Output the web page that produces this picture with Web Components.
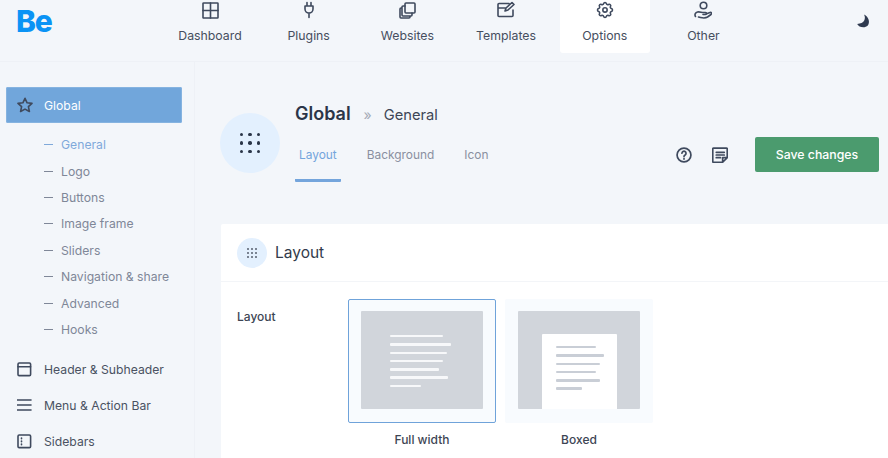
<!DOCTYPE html>
<html lang="en"><head><meta charset="utf-8"><title>Options</title>
<style>html,body{margin:0;height:100%;overflow:hidden;background:#f3f6fa;font-family:"Inter","Liberation Sans",sans-serif;color:#3e4656}</style></head>
<body>
<be-app></be-app>
<script>
const ICONS={
dashboard:'<rect x="1" y="1" width="15" height="15" rx=".6"/><path d="M1 8.500h15M8.500 1v15"/>',
plug:'<path d="M7 1.500V5M11 1.500V5M5 5h8v3a4 4 0 0 1-8 0zM9 12v4.500"/>',
pages:'<rect x="6" y="1" width="10" height="10" rx="1"/><path d="M6 4H4a1 1 0 0 0-1 1v8a1 1 0 0 0 1 1h8a1 1 0 0 0 1-1v-2M3 6H2a1 1 0 0 0-1 1v8a1 1 0 0 0 1 1h8a1 1 0 0 0 1-1v-1"/>',
template:'<path d="M12 2.500H2a1 1 0 0 0-1 1v11a1 1 0 0 0 1 1h13a1 1 0 0 0 1-1V9M1 7h8M8 10l1-3 6-5.500 2 2L11 9z"/>',
gear:'<path d="M10.325 4.317c.426-1.756 2.924-1.756 3.350 0a1.724 1.724 0 0 0 2.573 1.066c1.543-.940 3.310.826 2.370 2.370a1.724 1.724 0 0 0 1.065 2.572c1.756.426 1.756 2.924 0 3.350a1.724 1.724 0 0 0-1.066 2.573c.940 1.543-.826 3.310-2.370 2.370a1.724 1.724 0 0 0-2.572 1.065c-.426 1.756-2.924 1.756-3.350 0a1.724 1.724 0 0 0-2.573-1.066c-1.543.940-3.310-.826-2.370-2.370a1.724 1.724 0 0 0-1.065-2.572c-1.756-.426-1.756-2.924 0-3.350a1.724 1.724 0 0 0 1.066-2.573c-.940-1.543.826-3.310 2.370-2.370 1 .608 2.296.070 2.572-1.065z"/><circle cx="12" cy="12" r="2.600"/>',
hand:'<circle cx="9.500" cy="4.500" r="3.300"/><path d="M1.500 15.500c-1.200-2 0-4 2-4.500 2-.5 4 .5 6 .5h2c1.500 0 1.500 2 0 2H9m3-.5 4-1.500c1.500-.5 2 1 1 2l-3.500 2.500c-1.500 1-5 1-7 .5l-2-.5"/>',
star:'<path d="M8 1.300l2.100 4.500 4.900.6-3.600 3.300 1 4.800L8 12.100l-4.400 2.400 1-4.800L1 6.400l4.900-.6z"/>',
header:'<rect x="1" y="1" width="12.600" height="12.600" rx="1.200"/><path d="M1 4.800h12.600"/>',
menu:'<path d="M0.500 2h13.500M0.500 7h13.500M0.500 12h13.500"/>',
sidebar:'<rect x="1" y="1" width="12.600" height="12.600" rx="1.200"/><path d="M4.500 4v.8M4.500 7v.8M4.500 10v.8"/>',
help:'<circle cx="7.500" cy="7.500" r="6.500"/><path d="M5.600 5.800a1.900 1.900 0 1 1 2.900 1.700c-.7.400-1 .8-1 1.500M7.500 10.800v.5"/>',
note:'<path d="M1.500 1h12a.8.8 0 0 1 .8.800V10l-4.300 4.300H1.500a.8.8 0 0 1-.8-.8V1.800a.8.800 0 0 1 .8-.8zM4 5h7.500M4 7.500h7.500M4 10h4M14 10h-4v4"/>'
};
class BeIcon extends HTMLElement{connectedCallback(){
 if(this.shadowRoot)return;
 const s=this.getAttribute('size')||18,v=this.getAttribute('box')||s;
 this.attachShadow({mode:'open'}).innerHTML=`<style>:host{display:inline-flex;flex:none;line-height:0}svg{fill:none;stroke:currentColor;stroke-width:${this.getAttribute('sw')||1.6};stroke-linecap:round;stroke-linejoin:round}</style><svg width="${s}" height="${s}" viewBox="0 0 ${v} ${v}">${ICONS[this.getAttribute('name')]}</svg>`;
}}
customElements.define('be-icon',BeIcon);

class BeDots extends HTMLElement{connectedCallback(){
 if(this.shadowRoot)return;
 const d=+this.getAttribute('dot'),g=+this.getAttribute('gap');
 this.attachShadow({mode:'open'}).innerHTML=`<style>:host{display:grid;grid-template-columns:repeat(3,${d}px);gap:${g}px}i{width:${d}px;height:${d}px;border-radius:50%;background:currentColor}</style>`+'<i></i>'.repeat(9);
}}
customElements.define('be-dots',BeDots);

class BeNavItem extends HTMLElement{connectedCallback(){
 if(this.shadowRoot)return;
 this.attachShadow({mode:'open'}).innerHTML=`<style>
 :host{display:flex;flex-direction:column;align-items:center;width:90px;height:53px;box-sizing:border-box;border-radius:0 0 3px 3px;font-size:12.300px;color:#464e5e}
 :host([active]){background:#fff}
 .i{height:20px;display:flex;align-items:center;color:#3f4a5e}
 .t{margin-top:7.500px;line-height:16px}
 </style><div class="i"><slot name="icon"></slot></div><div class="t"><slot></slot></div>`;
}}
customElements.define('be-nav-item',BeNavItem);

class BeTopbar extends HTMLElement{connectedCallback(){
 if(this.shadowRoot)return;
 this.attachShadow({mode:'open'}).innerHTML=`<style>
 :host{display:flex;height:62px;box-sizing:border-box;border-bottom:1px solid #eef1f6}
 .logo{width:165px;padding:3px 0 0 16px;box-sizing:border-box;font:800 30px/36px "Inter","Liberation Sans",sans-serif;letter-spacing:-1.200px;color:#0a93f5}
 nav{display:flex;gap:8.700px;flex:1}
 .moon{width:47px;padding:14px 0 0 13px;box-sizing:border-box;color:#2f3a50}
 </style><div class="logo">Be</div><nav><slot></slot></nav><div class="moon"><svg width="17" height="17" viewBox="0 0 16 16"><path fill="currentColor" d="M9.500 1.500c1.900 4.200.3 8.600-6.500 8.800 1.300 3 7 4.500 10 1.500 2.300-2.700 1-8-3.500-10.300z" transform="translate(0 -1)"/></svg></div>`;
}}
customElements.define('be-topbar',BeTopbar);

class BeSideItem extends HTMLElement{connectedCallback(){
 if(this.shadowRoot)return;
 this.attachShadow({mode:'open'}).innerHTML=`<style>
 :host{display:flex;align-items:center;height:36px;margin-left:6px;width:176px;border-radius:2px;font-size:12.200px;color:#4a5262;box-sizing:border-box;padding-left:11px}
 :host([active]){background:#71a6db;color:#fff;box-shadow:0 0 0 1px #85b3e0 inset}
 .i{width:27px;display:flex;color:#3f4a5e}
 </style><div class="i"><slot name="icon"></slot></div><slot></slot>`;
}}
customElements.define('be-side-item',BeSideItem);

class BeSubItem extends HTMLElement{connectedCallback(){
 if(this.shadowRoot)return;
 this.attachShadow({mode:'open'}).innerHTML=`<style>
 :host{display:flex;align-items:center;height:26.400px;padding-left:44px;font-size:12.200px;color:#7f8798}
 :host([active]){color:#7fa9da}
 i{width:9px;height:1px;background:currentColor;margin-right:8px}
 </style><i></i><slot></slot>`;
}}
customElements.define('be-sub-item',BeSubItem);

class BeSidebar extends HTMLElement{connectedCallback(){
 if(this.shadowRoot)return;
 this.attachShadow({mode:'open'}).innerHTML=`<style>
 :host{display:block;width:195px;flex:none;box-sizing:border-box;padding-top:25px;border-right:1px solid #eef1f6;overflow:hidden}
 .sub{padding:8.500px 0 8.500px}
 </style><slot name="top"></slot><div class="sub"><slot name="sub"></slot></div><slot></slot>`;
}}
customElements.define('be-sidebar',BeSidebar);

class BeTab extends HTMLElement{connectedCallback(){
 if(this.shadowRoot)return;
 this.attachShadow({mode:'open'}).innerHTML=`<style>
 :host{display:block;box-sizing:border-box;height:40px;padding:0 4px;font-size:11.900px;line-height:26px;color:#8a90a0;border-bottom:3px solid transparent;border-radius:0 0 1px 1px}
 :host([active]){color:#74a5dc;border-bottom-color:#74a5dc}
 </style><slot></slot>`;
}}
customElements.define('be-tab',BeTab);

class BePageHead extends HTMLElement{connectedCallback(){
 if(this.shadowRoot)return;
 this.attachShadow({mode:'open'}).innerHTML=`<style>
 :host{display:flex;height:85px;padding:39px 9px 0 25px;box-sizing:content-box}
 .c{width:60px;height:60px;border-radius:50%;background:#e3f0fe;display:flex;align-items:center;justify-content:center;color:#2b3548;margin:12px 15px 0 0}
 .m{flex:1}
 .t{display:flex;align-items:baseline;height:27px;color:#2b3548;margin-top:1px;line-height:24px}
 b{font-size:18px;font-weight:600}
 .sep{color:#a4aab6;font-size:14px;margin:0 12px 0 13px}
 .g{font-size:14.700px;color:#3e4656}
 .tabs{display:flex;gap:22px;margin-top:13px}
 .r{display:flex;align-items:center;height:35px;margin-top:36px;color:#3f4a5e}
 .b{display:flex;margin-right:27px;gap:20px}
 button{width:124px;height:35px;border:0;border-radius:2px;background:#4b9b6e;color:#fff;font:500 12.300px "Inter","Liberation Sans",sans-serif;padding:0}
 </style><div class="c"><be-dots dot="3.500" gap="4.800"></be-dots></div>
 <div class="m"><div class="t"><b>Global</b><span class="sep">»</span><span class="g">General</span></div>
 <div class="tabs"><be-tab active>Layout</be-tab><be-tab>Background</be-tab><be-tab>Icon</be-tab></div></div>
 <div class="r"><div class="b"><be-icon name="help" size="16" box="15"></be-icon><be-icon name="note" size="16" box="15"></be-icon></div><button>Save changes</button></div>`;
}}
customElements.define('be-page-head',BePageHead);

class BeCard extends HTMLElement{connectedCallback(){
 if(this.shadowRoot)return;
 this.attachShadow({mode:'open'}).innerHTML=`<style>
 :host{display:block;flex:1;background:#fff;margin:38px 0 0 26px;border-radius:2px 0 0 0}
 .h{display:flex;align-items:center;height:57px;padding-left:16px;border-bottom:1px solid #f3f5f8;font-size:15.500px;color:#333b4b}
 .c{width:30px;height:30px;border-radius:50%;background:#e3f0fe;display:flex;align-items:center;justify-content:center;color:#57606f;margin-right:8px}
 .b{display:flex;padding:17px 0 0 16px}
 .l{width:111px;font-size:12px;font-weight:500;color:#3d4554;padding-top:10px}
 .o{display:flex;gap:9px}
 </style><div class="h"><div class="c"><be-dots dot="2" gap="2"></be-dots></div><slot name="title"></slot></div>
 <div class="b"><div class="l"><slot name="label"></slot></div><div class="o"><slot></slot></div></div>`;
}}
customElements.define('be-card',BeCard);

class BeLayoutOption extends HTMLElement{connectedCallback(){
 if(this.shadowRoot)return;
 const boxed=this.getAttribute('kind')==='boxed';
 const lines=(boxed?[40,48,44,40,44,26]:[53,61,57,53,49,58,31]).map(w=>`<i style="width:${w}px"></i>`).join('');
 this.attachShadow({mode:'open'}).innerHTML=`<style>
 :host{display:block;width:148px}
 .f{height:124px;box-sizing:border-box;background:#f8fbfe;border-radius:2px;border:1px solid #f8fbfe;padding:11px 12px 0}
 :host([active]) .f{border:1.500px solid #6fa3da}
 .s{height:98px;background:#d1d5db;border-radius:1px;display:flex;flex-direction:column;align-items:${boxed?'center':'flex-start'};${boxed?'justify-content:flex-end':'padding:24px 0 0 29px;box-sizing:border-box'}}
 .p{${boxed?'width:75px;height:75px;background:#fff;border-radius:1px 1px 0 0;padding:12px 0 0 14px;box-sizing:border-box;':''}display:flex;flex-direction:column;gap:5.900px}
 i{display:block;height:2.400px;background:${boxed?'#c9ced6':'#f7f8fa'};border-radius:1px}
 .t{text-align:center;margin-top:9px;font-size:12px;font-weight:500;color:#3d4554}
 </style><div class="f"><div class="s"><div class="p">${lines}</div></div></div><div class="t"><slot></slot></div>`;
}}
customElements.define('be-layout-option',BeLayoutOption);

class BeApp extends HTMLElement{connectedCallback(){
 if(this.shadowRoot)return;
 this.attachShadow({mode:'open'}).innerHTML=`<style>
 :host{display:flex;flex-direction:column;width:888px;height:458px;overflow:hidden}
 .w{display:flex;flex:1;min-height:0}
 main{flex:1;min-width:0;display:flex;flex-direction:column}
 </style>
 <be-topbar>
  <be-nav-item><be-icon slot="icon" name="dashboard" size="17"></be-icon>Dashboard</be-nav-item>
  <be-nav-item><be-icon slot="icon" name="plug" size="18"></be-icon>Plugins</be-nav-item>
  <be-nav-item><be-icon slot="icon" name="pages" size="17"></be-icon>Websites</be-nav-item>
  <be-nav-item><be-icon slot="icon" name="template" size="18"></be-icon>Templates</be-nav-item>
  <be-nav-item active><be-icon slot="icon" name="gear" size="20" box="24" sw="1.900"></be-icon>Options</be-nav-item>
  <be-nav-item><be-icon slot="icon" name="hand" size="18"></be-icon>Other</be-nav-item>
 </be-topbar>
 <div class="w"><be-sidebar>
  <be-side-item slot="top" active><be-icon slot="icon" name="star" size="16"></be-icon>Global</be-side-item>
  <be-sub-item slot="sub" active>General</be-sub-item><be-sub-item slot="sub">Logo</be-sub-item><be-sub-item slot="sub">Buttons</be-sub-item><be-sub-item slot="sub">Image frame</be-sub-item><be-sub-item slot="sub">Sliders</be-sub-item><be-sub-item slot="sub">Navigation &amp; share</be-sub-item><be-sub-item slot="sub">Advanced</be-sub-item><be-sub-item slot="sub">Hooks</be-sub-item>
  <be-side-item><be-icon slot="icon" name="header" size="15"></be-icon>Header &amp; Subheader</be-side-item>
  <be-side-item><be-icon slot="icon" name="menu" size="15"></be-icon>Menu &amp; Action Bar</be-side-item>
  <be-side-item><be-icon slot="icon" name="sidebar" size="15"></be-icon>Sidebars</be-side-item>
 </be-sidebar>
 <main><be-page-head></be-page-head>
 <be-card><span slot="title">Layout</span><span slot="label">Layout</span>
  <be-layout-option active>Full width</be-layout-option><be-layout-option kind="boxed">Boxed</be-layout-option>
 </be-card></main></div>`;
}}
customElements.define('be-app',BeApp);
</script></body></html>
